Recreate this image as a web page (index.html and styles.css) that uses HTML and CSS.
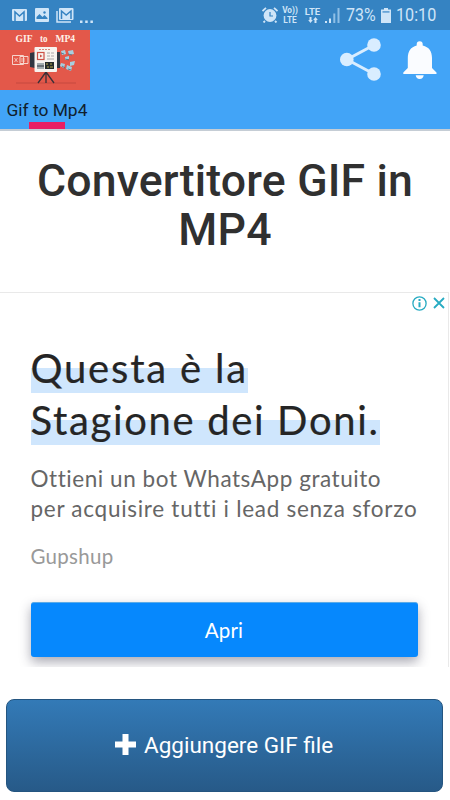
FILE: index.html
```html
<!DOCTYPE html>
<html lang="it">
<head>
<meta charset="utf-8">
<title>Gif to Mp4</title>
<link rel="stylesheet" href="styles.css">
</head>
<body>
<div class="status">
  <svg class="mail" width="15" height="12" viewBox="0 0 15 12"><rect width="15" height="12" rx="1" fill="#cfe5f8"/><path d="M3 12V3l4.500 4L12 3v9" fill="none" stroke="#3583c2" stroke-width="1.500"/></svg>
  <svg class="photo" width="14" height="14" viewBox="0 0 14 14"><rect width="14" height="14" rx="1" fill="#cfe5f8"/><path d="M1.500 11V9l3-3 3 3 2-2 3 3v1z" fill="#3583c2"/><circle cx="9.500" cy="4.500" r="1.200" fill="#3583c2"/></svg>
  <svg class="mails" width="18" height="15" viewBox="0 0 18 15"><path d="M1 3v11h14" fill="none" stroke="#cfe5f8" stroke-width="1.500"/><rect x="3" width="14.500" height="12" rx="1" fill="#cfe5f8"/><path d="M5.500 11V3l4.700 4L15 3v8" fill="none" stroke="#3583c2" stroke-width="1.500"/></svg>
  <svg class="dots" width="14" height="3" viewBox="0 0 14 3" fill="#cfe5f8"><rect y=".5" width="2.500" height="2.500"/><rect x="5.200" y=".5" width="2.500" height="2.500"/><rect x="10.400" y=".5" width="2.500" height="2.500"/></svg>
  <svg class="alarm" width="16" height="16" viewBox="0 0 16 16"><circle cx="8" cy="8.500" r="6.400" fill="#cfe5f8"/><path d="M.5 4 4 .8M15.500 4 12 .8M3 14l-1.500 1.500M13 14l1.500 1.500" stroke="#cfe5f8" stroke-width="1.800"/><path d="M8 5v4h3" fill="none" stroke="#3583c2" stroke-width="1.200"/></svg>
  <div class="net volte"><span>Vo))</span><span>LTE</span></div>
  <div class="net lte"><span>LTE</span><svg width="10" height="6" viewBox="0 0 10 6" fill="#cfe5f8"><path d="M1.500 0h2v3h1.300L2.500 6 .2 3h1.300zM6.500 6h2V3h1.300L7.500 0 5.200 3h1.300z"/></svg></div>
  <svg class="signal" width="15" height="15" viewBox="0 0 15 15"><g fill="#cfe5f8"><rect y="13" width="2" height="2"/><rect x="4" y="10.500" width="2" height="4.500"/></g><g fill="#8fbfe6"><rect x="8.300" y="5.500" width="2" height="9.500"/><rect x="12.500" y="0" width="2" height="15"/></g></svg>
  <span class="pct">73%</span>
  <svg class="battery" width="10" height="15" viewBox="0 0 10 15"><path d="M3 0h4v1.500h3V15H0V1.500h3z" fill="#cfe5f8"/><path d="M1.500 3h7v1.800h-7z" fill="#69a5d7"/></svg>
  <span class="time">10:10</span>
</div>
<header class="bar">
  <div class="brand">
    <svg class="logo" width="90" height="60" viewBox="0 0 90 60">
      <rect width="90" height="60" fill="#e3584a"/>
      <g class="logotext"><text x="15.500" y="12.300" textLength="17" lengthAdjust="spacingAndGlyphs">GIF</text><text x="40" y="12.300" textLength="7.500" lengthAdjust="spacingAndGlyphs">to</text><text x="55.500" y="12.300" textLength="19.500" lengthAdjust="spacingAndGlyphs">MP4</text></g>
      <path d="M16 53h60" stroke="#b8433b" stroke-width=".7"/>
      <path d="M46 42 38 53M46 42v11M46 42l8 11" stroke="#3a3038" stroke-width="1.300"/>
      <path d="M12.500 25.500h11v9h-11zM20 26.500h8v7h-8z" fill="none" stroke="#f6d4cc"/>
      <path d="m14.500 28 3 4m0-4-3 4M22 28v4m2-4v4" stroke="#f6d4cc" stroke-width=".8"/>
      <path d="m30 23 5-1v16l-5-1zM56 22h4v16h-4z" fill="#303640"/>
      <rect x="34.500" y="17" width="22.500" height="25" rx="1" fill="#f7f3ef"/>
      <path d="M39 19.500h12" stroke="#d9887c" stroke-dasharray="2 1"/>
      <rect x="37.500" y="22.500" width="6.500" height="7" fill="none" stroke="#cc5147" stroke-width="1.200"/>
      <path d="m40 24.500 2.500 1.500-2.500 1.500z" fill="#cc5147"/>
      <path d="M47 23h3m1 0h3m-7 3h3m1 0h3m-7 3h7" stroke="#aaa7a9"/>
      <path d="M37 33h7v6h-7z" fill="#a3adb0"/><path d="M37 36h7" stroke="#303640"/>
      <path d="M45 32h9v7h-9z" fill="#252b2b"/><path d="M46 34h2m2 0h2m-5 3h2m1 0h3" stroke="#b5a950"/>
      <g fill="#a7cfdf"><path d="m61 21 4-1 1 4-4 1zM68 21l5-1 1 4-5 1zM65 27l4-1v3l-4 1zM70 32l5-1-1 4-4 1zM61 33l4 1-1 4-4-2zM67 35l5 2-1 4-5-2z"/></g>
      <path d="m61 23 3 1m4 0 4 1m-7 4 4 1m-7 6 3 2m3 1 3 1" stroke="#456c80" stroke-width=".8"/>
    </svg>
    <span class="tab">Gif to Mp4</span>
    <i class="mark"></i>
  </div>
  <svg class="share" width="42" height="43" viewBox="0 0 42 43"><path d="M34 7 7 21.500 34 36" fill="none" stroke="#d9edff" stroke-width="3"/><g fill="#d9edff"><circle cx="34" cy="7" r="6.800"/><circle cx="6.800" cy="21.500" r="6.800"/><circle cx="34" cy="36" r="6.800"/></g></svg>
  <svg class="bell" width="34" height="38" viewBox="0 0 34 38" fill="#fafcff"><path d="M13.700 3.200a3 3 0 0 1 6 0v1.200c6.300 1.400 9.300 6 9.300 12.600v10l4.500 4.500V33H.3v-1.500L4.800 27V17c0-6.600 3-11.200 8.900-12.600z"/><path d="M12.700 34.300h8c-.3 2.300-1.700 3.700-4 3.700s-3.700-1.400-4-3.700z"/></svg>
</header>
<main>
  <h1>Convertitore GIF in MP4</h1>
  <section class="ad">
    <div class="choices">
      <svg width="15" height="15" viewBox="0 0 15 15" fill="none" stroke="#27abc2"><circle cx="7.500" cy="7.500" r="6.600" stroke-width="1.300"/><path d="M7.500 3v2M7.500 6.200v5" stroke-width="2"/></svg>
      <svg width="12" height="12" viewBox="0 0 12 12"><path d="m1 1 10 10M11 1 1 11" stroke="#27abc2" stroke-width="1.800"/></svg>
    </div>
    <h2><span class="hl l1">Questa è la</span><span class="hl l2">Stagione dei Doni.</span></h2>
    <p class="desc"><span class="d1">Ottieni un bot WhatsApp gratuito</span><span class="d2">per acquisire tutti i lead senza sforzo</span></p>
    <p class="by">Gupshup</p>
    <button class="open">Apri</button>
  </section>
  <button class="add"><svg width="21" height="21" viewBox="0 0 21 21"><path d="M7.500 0h6v7.500H21v6h-7.500V21h-6v-7.500H0v-6h7.500z" fill="#fff"/></svg><span>Aggiungere GIF file</span></button>
</main>
</body>
</html>
```
FILE: styles.css
```css
* { box-sizing: border-box; }
body { margin: 0; width: 450px; height: 800px; overflow: hidden; background: #fff; font-family: Roboto, sans-serif; }
svg { display: block; flex: none; }
button { font-family: inherit; padding: 0; }
.status { height: 30px; background: #3583c2; display: flex; align-items: center; padding-left: 12px; color: #cfe5f8; white-space: nowrap; }
.photo { margin-left: 8px; }
.mails { margin-left: 7px; }
.dots { margin: 12px 0 0 6px; }
.alarm { margin-left: 168px; }
.net { display: flex; flex-direction: column; align-items: center; font-size: 8.300px; line-height: 10px; font-weight: 700; flex: none; }
.volte { width: 16px; margin-left: 4px; }
.lte { width: 17px; margin-left: 6px; font-size: 9.500px; }
.signal { margin-left: 4px; }
.pct, .time { font-size: 19px; line-height: 30px; flex: none; transform-origin: left; }
.pct { width: 30px; margin-left: 6px; transform: scaleX(.84); }
.battery { margin-left: 5px; }
.time { width: 40px; margin-left: 5px; transform: scaleX(.85); }
.bar { height: 101px; background: #42a4f7; border-bottom: 2px solid #c5cdd5; display: flex; align-items: flex-start; }
.brand { width: 94px; height: 99px; display: flex; flex-direction: column; }
.logotext { font: bold 10px "Liberation Serif", serif; fill: #fff1e8; }
.tab { height: 31px; padding-left: 6.500px; font-size: 17.400px; line-height: 40px; color: #10202c; white-space: nowrap; }
.mark { width: 36px; height: 7px; margin: 1px 0 0 29px; background: #e91e63; }
.share { margin: 8px 0 0 246px; }
.bell { margin: 11px 0 0 21px; }
h1 { margin: 0; height: 161px; padding: 26px 20px 0; font-size: 44.600px; line-height: 49px; font-weight: 500; letter-spacing: .18px; color: #303030; text-align: center; }
.ad { width: 449px; height: 375px; border-top: 1px solid #e9e9e9; border-right: 1px solid #e9e9e9; padding: 3px 3px 0 30.500px; overflow: hidden; }
.choices { display: flex; justify-content: flex-end; align-items: center; gap: 6px; height: 14px; }
h2 { margin: 32px 0 0; font: 400 40px/52px Lato, sans-serif; color: #252525; display: flex; flex-direction: column; align-items: flex-start; }
.hl { height: 52px; background: linear-gradient(#cfe6fd, #cfe6fd) 0 26px / 100% 25px no-repeat; white-space: nowrap; -webkit-text-stroke: .2px #252525; }
.l1 { width: 217px; letter-spacing: 1.800px; }
.l2 { width: 349.500px; letter-spacing: 1.650px; }
.desc { margin: 18px 0 0; font: 400 22.500px/29.500px Lato, sans-serif; color: #666; }
.desc span { display: block; white-space: nowrap; }
.d1 { letter-spacing: .56px; }
.d2 { letter-spacing: .72px; }
.by { margin: 18px 0 0; font: 400 20.500px/30px Lato, sans-serif; letter-spacing: .3px; color: #999; }
.open { display: block; width: 387px; height: 55px; margin-top: 31px; padding-bottom: 1px; border: 0; border-top: 1px solid #5aabe8; border-radius: 3px; background: #0688fd; color: #fff; font: 400 20.500px Lato, sans-serif; letter-spacing: .2px; box-shadow: 0 5px 12px rgba(40, 40, 65, .4); }
.add { width: 437px; height: 93px; margin: 32px 0 0 6px; border: 1px solid #245580; border-radius: 8px; background: linear-gradient(#337ab7, #275a88); color: #fff; font-size: 22.500px; display: flex; align-items: center; padding: 0 0 2px 108px; gap: 8px; }
```
